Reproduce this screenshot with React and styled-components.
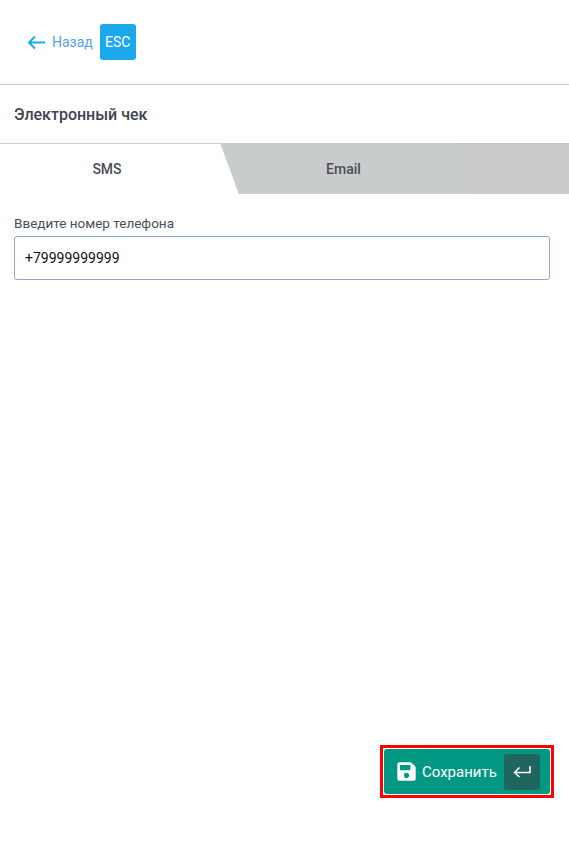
import React from "react";
import styled, { createGlobalStyle } from "styled-components";
import { FaSave } from "react-icons/fa";

const GlobalStyle = createGlobalStyle`
  html, body {
    margin: 0;
    padding: 0;
    background: #fff;
    font-family: Roboto, "Noto Sans", sans-serif;
  }
`;

const Page = styled.div`
  display: flex;
  flex-direction: column;
  min-height: 100vh;
  box-sizing: border-box;
`;

const Header = styled.header`
  display: flex;
  align-items: center;
  height: 84px;
  padding: 0 27px;
  box-sizing: content-box;
  border-bottom: 1px solid #cccccc;
`;

const BackLink = styled.a`
  display: flex;
  align-items: center;
  gap: 7px;
  color: #5a9fe6;
  font-size: 14px;
`;

const EscBadge = styled.span`
  display: flex;
  align-items: center;
  justify-content: center;
  width: 36px;
  height: 36px;
  margin-left: 7px;
  border-radius: 3px;
  background: #1ba8ed;
  color: #fff;
  font-size: 14px;
`;

const Title = styled.h1`
  display: flex;
  align-items: center;
  height: 58px;
  margin: 0;
  padding: 0 14px;
  color: #40444f;
  font-size: 16px;
  font-weight: 500;
`;

const Tabs = styled.div`
  display: flex;
  height: 51px;
  background: #cacaca;
`;

const Tab = styled.div`
  display: flex;
  align-items: center;
  justify-content: center;
  box-sizing: border-box;
  color: #4a4e5a;
  font-size: 14px;
  font-weight: 500;
`;

const SmsTab = styled(Tab)`
  width: 240px;
  padding-right: 26px;
  background: #fff;
  box-shadow: inset 0 1px 0 #cccccc;
  clip-path: polygon(0 0, 221px 0, 239px 100%, 0 100%);
`;

const EmailTab = styled(Tab)`
  width: 253px;
  margin-left: -20px;
  padding-right: 6px;
  background: #c9cccd;
  clip-path: polygon(0 0, 238px 0, 253px 100%, 19px 100%);
`;

const Field = styled.div`
  display: flex;
  flex-direction: column;
  gap: 5px;
  padding: 21px 19px 0 14px;
`;

const Label = styled.label`
  color: #4a4e5a;
  font-size: 13.5px;
  line-height: 16px;
`;

const Input = styled.input`
  height: 44px;
  box-sizing: border-box;
  padding: 0 10px;
  border: 1px solid #8fa8ca;
  border-radius: 3px;
  outline: none;
  color: #111;
  font-family: inherit;
  font-size: 14px;
`;

const Footer = styled.footer`
  display: flex;
  justify-content: flex-end;
  margin-top: auto;
  padding: 0 15px 46px 0;
`;

const SaveOutline = styled.div`
  padding: 1px;
  border: 3px solid #ff0000;
`;

const SaveButton = styled.button`
  display: flex;
  align-items: center;
  width: 166px;
  height: 45px;
  box-sizing: border-box;
  padding: 0 10px 0 12px;
  border: 0;
  border-radius: 3px;
  background: #019883;
  color: #fff;
  font-family: inherit;
  font-size: 15px;
`;

const SaveLabel = styled.span`
  flex: 1;
  margin-left: 5px;
  text-align: left;
`;

const EnterKey = styled.span`
  display: flex;
  align-items: center;
  justify-content: center;
  width: 36px;
  height: 36px;
  border-radius: 3px;
  background: #1e665e;
`;

const ArrowIcon = () => (
  <svg width="18" height="15" viewBox="0 0 18 15" fill="none" stroke="#1ba8ed" strokeWidth="2">
    <path d="M18 7.5H2M8 1.5L2 7.5L8 13.5" />
  </svg>
);

const EnterIcon = () => (
  <svg width="18" height="13" viewBox="0 0 18 13" fill="none" stroke="#fff" strokeWidth="1.5">
    <path d="M17 1V7.5H2M6.5 2.5L1.5 7.5L6.5 12" />
  </svg>
);

export default function App() {
  return (
    <Page>
      <GlobalStyle />
      <Header>
        <BackLink>
          <ArrowIcon />
          Назад
        </BackLink>
        <EscBadge>ESC</EscBadge>
      </Header>
      <Title>Электронный чек</Title>
      <Tabs>
        <SmsTab>SMS</SmsTab>
        <EmailTab>Email</EmailTab>
      </Tabs>
      <Field>
        <Label>Введите номер телефона</Label>
        <Input defaultValue="+79999999999" />
      </Field>
      <Footer>
        <SaveOutline>
          <SaveButton>
            <FaSave size={21} />
            <SaveLabel>Сохранить</SaveLabel>
            <EnterKey>
              <EnterIcon />
            </EnterKey>
          </SaveButton>
        </SaveOutline>
      </Footer>
    </Page>
  );
}
